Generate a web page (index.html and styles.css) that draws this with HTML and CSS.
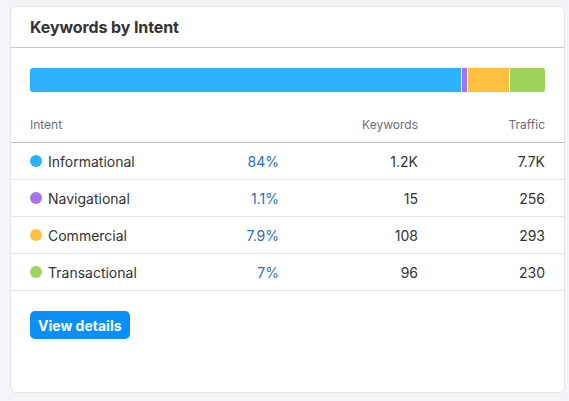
FILE: index.html
```html
<!DOCTYPE html>
<html>
<head>
<meta charset="utf-8">
<link rel="stylesheet" href="styles.css">
</head>
<body>
<div class="card">
  <div class="card-header"><h2 class="title">Keywords by Intent</h2></div>
  <div class="card-body">
    <div class="bar">
      <div class="seg seg-info" style="width:83.6%"></div>
      <div class="seg seg-nav" style="width:1.1%"></div>
      <div class="seg seg-com" style="width:8%"></div>
      <div class="seg seg-tra" style="flex:1"></div>
    </div>
    <div class="table">
      <div class="row head">
        <div class="cell">Intent</div>
        <div class="cell"></div>
        <div class="cell num">Keywords</div>
        <div class="cell num">Traffic</div>
      </div>
      <div class="row">
        <div class="cell intent"><span class="dot dot-info"></span>Informational</div>
        <div class="cell num pct">84%</div>
        <div class="cell num">1.2K</div>
        <div class="cell num">7.7K</div>
      </div>
      <div class="row">
        <div class="cell intent"><span class="dot dot-nav"></span>Navigational</div>
        <div class="cell num pct">1.1%</div>
        <div class="cell num">15</div>
        <div class="cell num">256</div>
      </div>
      <div class="row">
        <div class="cell intent"><span class="dot dot-com"></span>Commercial</div>
        <div class="cell num pct">7.9%</div>
        <div class="cell num">108</div>
        <div class="cell num">293</div>
      </div>
      <div class="row">
        <div class="cell intent"><span class="dot dot-tra"></span>Transactional</div>
        <div class="cell num pct">7%</div>
        <div class="cell num">96</div>
        <div class="cell num">230</div>
      </div>
    </div>
    <div class="actions"><button class="btn">View details</button></div>
  </div>
</div>
</body>
</html>
```
FILE: styles.css
```css
* { box-sizing: border-box; }
html, body { margin: 0; }
body {
  background: #f3f4f8;
  font-family: Inter, "Noto Sans", sans-serif;
  color: #333;
  padding: 6px 4px 8px 10px;
  width: 569px;
  height: 401px;
  overflow: hidden;
}
.card {
  width: 555px;
  height: 387px;
  background: #fff;
  border: 1px solid #e3e4e9;
  border-radius: 6px;
}
.card-header {
  height: 41px;
  border-bottom: 1px solid #c8c9cc;
  display: flex;
  align-items: center;
  padding: 0 19px;
}
.title {
  margin: 0;
  font-size: 16px;
  font-weight: 700;
  color: #333;
  letter-spacing: -0.1px;
}
.card-body { padding-top: 20px; }
.bar {
  margin: 0 19px;
  height: 24px;
  display: flex;
  gap: 1px;
  border-radius: 3px;
  overflow: hidden;
}
.seg { height: 100%; }
.seg-info { background: #2db1fd; }
.seg-nav { background: #a674ea; }
.seg-com { background: #fec03e; }
.seg-tra { background: #9ed45c; }
.table { margin-top: 25px; }
.row {
  display: grid;
  grid-template-columns: 169px 80px 139px 127px;
  padding: 0 19px;
  height: 37px;
  align-items: center;
  border-bottom: 1px solid #e4e4e6;
  font-size: 14px;
}
.row.head {
  height: 26px;
  align-items: start;
  border-bottom-color: #bfc0c4;
  font-size: 12px;
  color: #6c6e79;
}
.num { text-align: right; }
.pct { color: #2a6fba; }
.intent { display: flex; align-items: center; gap: 6px; }
.dot { width: 12px; height: 12px; border-radius: 50%; display: inline-block; }
.dot-info { background: #2db1fd; }
.dot-nav { background: #a674ea; }
.dot-com { background: #fec03e; }
.dot-tra { background: #9ed45c; }
.actions { padding: 20px 19px 0; }
.btn {
  height: 28px;
  padding: 0 8px;
  border: none;
  border-radius: 5px;
  background: #0a8ff6;
  color: #fff;
  font-family: Inter, "Noto Sans", sans-serif;
  font-size: 14px;
  font-weight: 700;
  cursor: pointer;
}
```
